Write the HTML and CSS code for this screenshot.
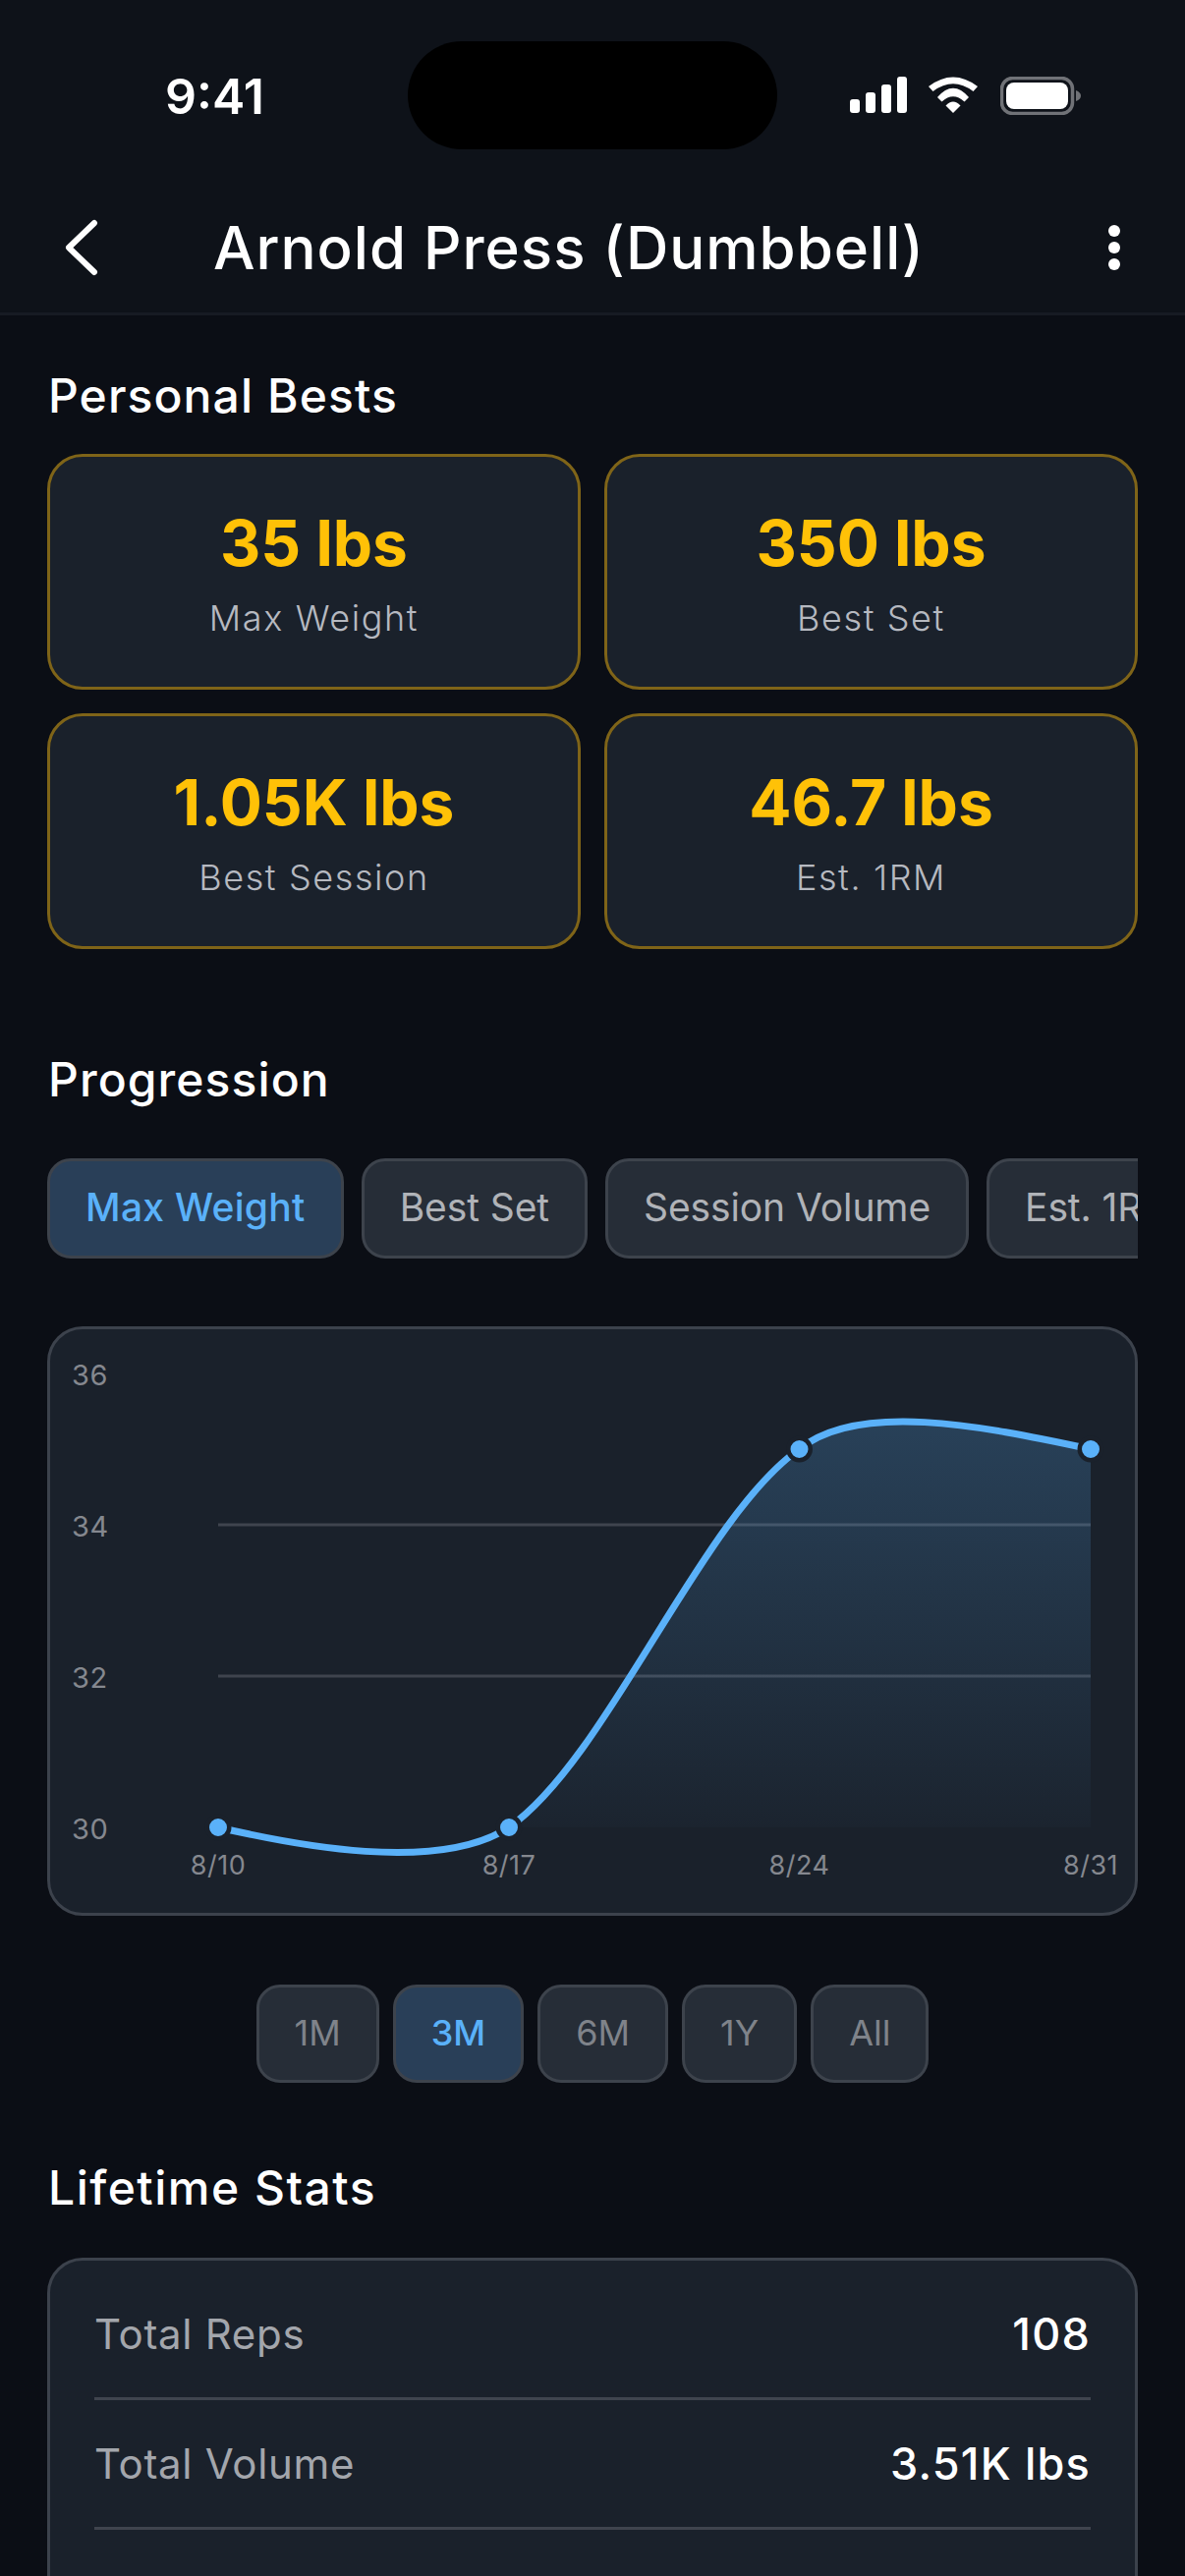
FILE: index.html
```html
<!DOCTYPE html>
<html lang="en">
<head>
  <meta charset="UTF-8" />
  <meta name="viewport" content="width=device-width, initial-scale=1.0"/>
  <title>Arnold Press (Dumbbell)</title>
  <link rel="stylesheet" href="styles.css">
</head>
<body>
  <header class="top">
    <div class="status-bar">
      <span class="time">9:41</span>
      <div class="island"></div>
      <div class="status-icons">
        <svg width="58" height="38" viewBox="0 0 58 38">
          <rect x="0" y="23" width="10" height="14" rx="3" fill="#fff"/>
          <rect x="16" y="16" width="10" height="21" rx="3" fill="#fff"/>
          <rect x="32" y="8" width="10" height="29" rx="3" fill="#fff"/>
          <rect x="48" y="0" width="10" height="37" rx="3" fill="#fff"/>
        </svg>
        <svg width="51" height="38" viewBox="0 0 51 38">
          <path d="M0 10Q25-9 50 10L45.500 15Q25-.5 4.500 15Z" fill="#fff"/>
          <path d="M9 21Q25 2.400 41 21L36.500 25.500Q25 15 13.500 25.500Z" fill="#fff"/>
          <path d="M17.500 29.500Q25 21.500 32.500 29.500L25 37Z" fill="#fff"/>
        </svg>
        <svg width="82" height="39" viewBox="0 0 82 39">
          <rect x="1.500" y="1.500" width="72" height="36" rx="11" fill="none" stroke="#707277" stroke-width="3.500"/>
          <rect x="6" y="6" width="63" height="27" rx="8" fill="#fff"/>
          <path d="M77 14Q82 16 82 19.500Q82 23 77 25Z" fill="#707277"/>
        </svg>
      </div>
    </div>
    <nav class="nav-bar">
      <svg class="back" width="34" height="60" viewBox="0 0 34 60">
        <path d="M30 5L4 30L30 55" fill="none" stroke="#fff" stroke-width="6" stroke-linecap="round" stroke-linejoin="round"/>
      </svg>
      <h1 class="nav-title">Arnold Press (Dumbbell)</h1>
      <div class="more">
        <span class="more-dot"></span>
        <span class="more-dot"></span>
        <span class="more-dot"></span>
      </div>
    </nav>
  </header>

  <main class="content">
    <h2 class="section-title bests-title">Personal Bests</h2>
    <div class="best-grid">
      <div class="best-card">
        <div class="best-value">35 lbs</div>
        <div class="best-label">Max Weight</div>
      </div>
      <div class="best-card">
        <div class="best-value">350 lbs</div>
        <div class="best-label">Best Set</div>
      </div>
      <div class="best-card">
        <div class="best-value">1.05K lbs</div>
        <div class="best-label">Best Session</div>
      </div>
      <div class="best-card">
        <div class="best-value">46.7 lbs</div>
        <div class="best-label">Est. 1RM</div>
      </div>
    </div>

    <h2 class="section-title progress-title">Progression</h2>
    <div class="metric-tabs">
      <button class="chip active">Max Weight</button>
      <button class="chip">Best Set</button>
      <button class="chip">Session Volume</button>
      <button class="chip">Est. 1RM</button>
    </div>

    <div class="chart-card">
      <svg class="chart" width="1104" height="594" viewBox="51 1353 1104 594">
        <defs>
          <linearGradient id="areaFade" x1="0" y1="1449" x2="0" y2="1860" gradientUnits="userSpaceOnUse">
            <stop offset="0" stop-color="#5ab1f9" stop-opacity="0.22"/>
            <stop offset="1" stop-color="#5ab1f9" stop-opacity="0.02"/>
          </linearGradient>
        </defs>
        <line class="grid-line" x1="222" y1="1552" x2="1110" y2="1552"/>
        <line class="grid-line" x1="222" y1="1706" x2="1110" y2="1706"/>
        <path d="M518 1860C618 1790 713.500 1545 813.500 1475C873 1427 995 1450 1110 1475L1110 1860Z" fill="url(#areaFade)"/>
        <path class="curve" d="M222 1860C300 1878 445 1907 518 1860C618 1790 713.500 1545 813.500 1475C873 1427 995 1450 1110 1475"/>
        <circle class="point" cx="222" cy="1860" r="11.250"/>
        <circle class="point" cx="518" cy="1860" r="11.250"/>
        <circle class="point" cx="813.500" cy="1475" r="11.250"/>
        <circle class="point" cx="1110" cy="1475" r="11.250"/>
        <text class="axis-y" x="73" y="1410">36</text>
        <text class="axis-y" x="73" y="1564">34</text>
        <text class="axis-y" x="73" y="1718">32</text>
        <text class="axis-y" x="73" y="1872">30</text>
        <text class="axis-x" x="222" y="1908">8/10</text>
        <text class="axis-x" x="518" y="1908">8/17</text>
        <text class="axis-x" x="813.500" y="1908">8/24</text>
        <text class="axis-x" x="1110" y="1908">8/31</text>
      </svg>
    </div>

    <div class="range-tabs">
      <button class="chip range">1M</button>
      <button class="chip range active">3M</button>
      <button class="chip range">6M</button>
      <button class="chip range">1Y</button>
      <button class="chip range">All</button>
    </div>

    <h2 class="section-title lifetime-title">Lifetime Stats</h2>
    <div class="stats-card">
      <div class="stat-row">
        <span class="stat-name">Total Reps</span>
        <span class="stat-value">108</span>
      </div>
      <div class="stat-row">
        <span class="stat-name">Total Volume</span>
        <span class="stat-value">3.51K lbs</span>
      </div>
    </div>
  </main>
</body>
</html>
```

FILE: styles.css
```css
html, body {
  margin: 0;
  padding: 0;
  height: 2622px;
  overflow: hidden;
  background-color: #0b0e15;
  font-family: "Inter", "Liberation Sans", sans-serif;
  color: #fff;
}

.top {
  background-color: #0e1219;
  border-bottom: 3px solid #171b23;
  height: 318px;
}

.status-bar {
  position: relative;
  height: 176px;
  display: flex;
  justify-content: space-between;
  align-items: flex-start;
  padding: 78px 106px 0 168px;
  box-sizing: border-box;
}

.time {
  font-size: 50px;
  line-height: 40px;
  font-weight: 600;
}

.island {
  position: absolute;
  left: 415px;
  top: 42px;
  width: 376px;
  height: 110px;
  border-radius: 55px;
  background-color: #000;
}

.status-icons {
  display: flex;
  align-items: flex-start;
  gap: 22px;
}

.status-icons svg {
  display: block;
}

.nav-bar {
  display: flex;
  align-items: center;
  height: 150px;
  margin-top: 1px;
  padding: 0 66px;
}

.back {
  display: block;
  flex-shrink: 0;
}

.nav-title {
  margin: 0 0 0 117px;
  font-size: 60px;
  font-weight: 500;
  letter-spacing: 1px;
  white-space: nowrap;
}

.more {
  margin-left: auto;
  display: flex;
  flex-direction: column;
  gap: 5px;
}

.more-dot {
  display: block;
  width: 12px;
  height: 12px;
  border-radius: 50%;
  background-color: #fff;
}

.content {
  padding: 52px 48px 0;
}

.section-title {
  margin: 0;
  font-size: 48px;
  line-height: 60px;
  font-weight: 500;
  letter-spacing: 1.1px;
  padding-left: 1px;
}

.bests-title {
  margin-bottom: 29px;
}

.progress-title {
  margin-top: 103px;
  margin-bottom: 50px;
}

.lifetime-title {
  margin-top: 77px;
  margin-bottom: 41px;
  letter-spacing: 1.5px;
}

.best-grid {
  display: grid;
  grid-template-columns: 1fr 1fr;
  gap: 24px;
}

.best-card {
  height: 240px;
  box-sizing: border-box;
  border: 3px solid #7f6418;
  border-radius: 36px;
  background-color: #1a212b;
  display: flex;
  flex-direction: column;
  align-items: center;
  justify-content: center;
  gap: 15px;
}

.best-value {
  font-size: 64px;
  line-height: 78px;
  font-weight: 700;
  color: #ffc107;
}

.best-label {
  font-size: 36px;
  line-height: 44px;
  font-weight: 300;
  letter-spacing: 1.6px;
  color: #b6b9c0;
}

.metric-tabs {
  display: flex;
  gap: 18px;
  overflow: hidden;
  margin-bottom: 69px;
}

.chip {
  flex-shrink: 0;
  height: 102px;
  padding: 0 36px 3px;
  box-sizing: border-box;
  border: 3px solid #3d434c;
  border-radius: 24px;
  background-color: #262d37;
  color: #b0b3b8;
  font-family: inherit;
  font-size: 39px;
  letter-spacing: -0.1px;
}

.chip.active {
  background-color: #293f58;
  color: #5ab1f9;
  font-weight: 500;
  letter-spacing: 0.3px;
}

.chart-card {
  height: 600px;
  box-sizing: border-box;
  border: 3px solid #3c424c;
  border-radius: 36px;
  background-color: #1a212b;
  overflow: hidden;
}

.chart {
  display: block;
}

.grid-line {
  stroke: #3f444e;
  stroke-width: 3;
}

.curve {
  fill: none;
  stroke: #5ab1f9;
  stroke-width: 7;
}

.point {
  fill: #5ab1f9;
  stroke: #1a212b;
  stroke-width: 4.5;
}

.axis-y, .axis-x {
  font-size: 29px;
  letter-spacing: 0.5px;
  fill: #85888f;
}

.axis-x {
  font-size: 27px;
  text-anchor: middle;
}

.range-tabs {
  display: flex;
  justify-content: center;
  gap: 14px;
  margin-top: 70px;
}

.chip.range {
  height: 100px;
  padding: 0 36px 3px;
  font-size: 36px;
  letter-spacing: 0;
  color: #7f838a;
}

.chip.range.active {
  color: #5ab1f9;
}

.stats-card {
  box-sizing: border-box;
  height: 500px;
  padding: 10px 45px;
  border: 3px solid #3c424c;
  border-radius: 36px;
  background-color: #1a212b;
}

.stat-row {
  display: flex;
  justify-content: space-between;
  align-items: center;
  height: 129px;
  border-bottom: 3px solid #3f444e;
  font-size: 42px;
}

.stat-name {
  letter-spacing: 0.7px;
  color: #a3a6ac;
}

.stat-value {
  font-size: 45px;
  font-weight: 500;
  letter-spacing: 1.2px;
}
```
